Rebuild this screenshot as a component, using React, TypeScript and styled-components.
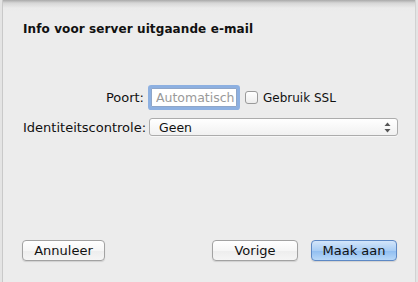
import React from "react";
import styled, { createGlobalStyle } from "styled-components";

const GlobalStyle = createGlobalStyle`
  html, body {
    margin: 0;
    padding: 0;
    width: 418px;
    height: 282px;
    overflow: hidden;
    background: #e4e4e4;
  }
  * {
    box-sizing: border-box;
  }
`;

const Sheet = styled.div`
  margin: 0 2px;
  height: 282px;
  display: flex;
  flex-direction: column;
  border-left: 1px solid #c9c9c9;
  border-right: 1px solid #d2d2d2;
  background: linear-gradient(#a9a9a9 0px, #d6d6d6 3px, #ebebeb 8px, #ececec 12px);
  font-family: "DejaVu Sans", "Liberation Sans", sans-serif;
  font-size: 12px;
  color: #111;
`;

const Title = styled.div`
  padding: 21px 0 0 20px;
  font-weight: bold;
  line-height: 16px;
  letter-spacing: 0.1px;
`;

const Form = styled.div`
  margin-top: 48px;
  padding: 0 17px 0 20px;
  display: grid;
  grid-template-columns: 121px 1fr;
  column-gap: 4px;
  row-gap: 8px;
  align-items: center;
`;

const Label = styled.label`
  text-align: right;
  white-space: nowrap;
  font-size: 13px;
`;

const Line = styled.div`
  display: flex;
  align-items: center;
`;

const TextInput = styled.input`
  margin: 3px 0 3px 3px;
  width: 86px;
  height: 19px;
  padding: 0 0 0 4px;
  border: 1px solid #8fa6c8;
  border-radius: 1px;
  outline: none;
  box-shadow: 0 0 0 3px rgba(110, 156, 222, 0.75);
  font: inherit;
  font-size: 12.5px;
  color: #111;
  background: #fff;
  &::placeholder {
    color: #9a9a9a;
  }
`;

const Check = styled.span`
  margin-left: 8px;
  width: 13px;
  height: 13px;
  border: 1px solid #9a9a9a;
  border-radius: 3px;
  background: linear-gradient(#ffffff, #ededed);
`;

const CheckText = styled.span`
  margin-left: 5px;
`;

const Select = styled.div`
  margin-left: 1px;
  height: 18px;
  display: flex;
  align-items: center;
  justify-content: space-between;
  padding: 0 6px 0 9px;
  border: 1px solid #acacac;
  border-radius: 3px;
  background: linear-gradient(#ffffff, #f1f1f1);
  box-shadow: 0 1px 0 rgba(255, 255, 255, 0.6);
  font-size: 12.5px;
`;

const Footer = styled.div`
  margin-top: auto;
  padding: 0 18px 21px 19px;
  display: flex;
  align-items: center;
  gap: 13px;
`;

const Spacer = styled.div`
  flex: 1;
`;

const Button = styled.button<{ $primary?: boolean; $w: number }>`
  width: ${({ $w }) => $w}px;
  height: 21px;
  padding: 0;
  border-radius: 4px;
  font: inherit;
  font-size: 13px;
  color: #111;
  border: 1px solid ${({ $primary }) => ($primary ? "#5d88c4" : "#a2a2a2")};
  background: ${({ $primary }) =>
    $primary
      ? "linear-gradient(#d3e5fa, #a9cdf4 50%, #8fbdf0 51%, #b8d8f8)"
      : "linear-gradient(#ffffff, #f6f6f6 50%, #ededed 51%, #f5f5f5)"};
  box-shadow: 0 1px 1px rgba(0, 0, 0, 0.12);
`;

const Arrows = () => (
  <svg width="7" height="11" viewBox="0 0 7 11">
    <path d="M3.5 0.5 L6.5 4 L0.5 4 Z" fill="#555" />
    <path d="M3.5 10.5 L6.5 7 L0.5 7 Z" fill="#555" />
  </svg>
);

export default function App() {
  return (
    <>
      <GlobalStyle />
      <Sheet>
        <Title>Info voor server uitgaande e-mail</Title>
        <Form>
          <Label>Poort:</Label>
          <Line>
            <TextInput placeholder="Automatisch" />
            <Check />
            <CheckText>Gebruik SSL</CheckText>
          </Line>
          <Label>Identiteitscontrole:</Label>
          <Select>
            <span>Geen</span>
            <Arrows />
          </Select>
        </Form>
        <Footer>
          <Button $w={83}>Annuleer</Button>
          <Spacer />
          <Button $w={86}>Vorige</Button>
          <Button $w={86} $primary>
            Maak aan
          </Button>
        </Footer>
      </Sheet>
    </>
  );
}
